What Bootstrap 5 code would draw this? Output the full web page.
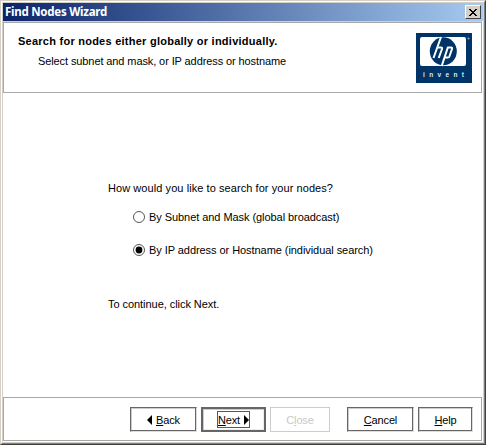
<!DOCTYPE html>
<html lang="en"><head><meta charset="utf-8"><title>Find Nodes Wizard</title>
<link href="https://cdn.jsdelivr.net/npm/bootstrap@5.3.0/dist/css/bootstrap.min.css" rel="stylesheet">
<style>
body{font:11px/14px "Liberation Sans",Arial,sans-serif;color:#000;background:#fff;overflow:hidden}
.wizard{width:486px;height:445px;border:1px solid #d4d0c8;border-right-color:#404040;border-bottom-color:#404040}
.frame-inner{border:1px solid #fff;border-right-color:#808080;border-bottom-color:#808080}
.frame-face{border:1px solid #d4d0c8;background:#fff}
.title-strip{height:18px;background:linear-gradient(90deg,#0a246a,#a6caf0);color:#fff;padding:0 2px;flex:none}
.title-text{font:bold 11.5px/18px "Noto Sans",sans-serif;letter-spacing:-.25px;white-space:nowrap}
.close-box{width:16px;height:14px;background:#d4d0c8;border:1px solid #fff;border-right-color:#404040;border-bottom-color:#404040}
.header-pane{height:71px;margin:1px 1px 0 0;border:1px solid #a8a8a8;padding:10px 9px 0 14px;box-shadow:0 -1px #d4d0c8;flex:none}
.headline{font-weight:bold;padding-top:1px;letter-spacing:.25px}
.subline{padding:6px 0 0 20px;letter-spacing:-.1px}
.body-pane{padding:88px 0 0 105px}
.ask{letter-spacing:.07px}
.choice{height:14px;padding-left:25px;gap:4px;letter-spacing:-.06px}
.first{margin-top:15px}.second{margin-top:19px}.hint{margin-top:40px;letter-spacing:-.05px}
.footer-pane{height:44px;border:1px solid #a8a8a8;margin:0 1px 1px 0;padding:9px 8px 0 0;gap:4px;flex:none}
.wbtn{height:25px;display:flex;align-items:center;justify-content:center;gap:4px;border:1px solid;border-color:#666 #ddd #ddd #666;border-radius:0;background:#fff;padding:0;font-size:11px;line-height:14px;color:#000;letter-spacing:-.15px;box-shadow:inset -1px -1px #666,inset 1px 1px #ccc}
.w67{width:67px}.w65{width:65px}.w60{width:60px;margin-right:13px}.w55{width:55px}
.main-btn{border:2px solid #666;box-shadow:inset 1px 1px #ccc,inset -1px -1px #eee}
.wbtn.off,.wbtn.off:disabled{color:#c8c8c8;border-color:#ccc;box-shadow:none;opacity:1;background:#fff}
.focus-box{border:1px solid #36618f;height:17px;width:33px;gap:4px}
</style>
<script src="https://cdn.jsdelivr.net/npm/bootstrap@5.3.0/dist/js/bootstrap.bundle.min.js"></script>
</head><body>
<main class="wizard"><div class="frame-inner h-100"><div class="frame-face h-100 d-flex flex-column">
<div class="title-strip d-flex justify-content-between align-items-center"><span class="title-text">Find Nodes Wizard</span>
<div class="close-box d-flex align-items-center justify-content-center"><svg width="8" height="7" viewBox="0 0 8 7" shape-rendering="crispEdges"><path d="M0 0h2v1h1v1h2V1h1V0h2v1H7v1H6v1H5v1h1v1h1v1h1v1H6V6H5V5H3v1H2v1H0V6h1V5h1V4h1V3H2V2H1V1H0z"/></svg></div></div>
<header class="header-pane d-flex justify-content-between"><div><div class="headline">Search for nodes either globally or individually.</div><div class="subline">Select subnet and mask, or IP address or hostname</div></div>
<svg width="56" height="50" viewBox="0 0 56 50"><path fill="#036" d="M0 0h56v50H0z"/><rect x="4" y="4" width="46" height="29" rx="2" fill="#fff"/><ellipse cx="27.300" cy="18.300" rx="13.500" ry="14" fill="#036"/><g fill="none" stroke="#fff" stroke-width="2"><path d="M25 4l-7.500 21M21.500 14.500H25q1.500 0 1 1.500L22.700 25M32 14l-6.300 19M31.500 14.500H35q1.500 0 1 1.500l-2.600 7.500q-.4 1-1.500 1H28"/></g><circle cx="52.500" cy="5.500" r="1" fill="#9ab"/><text x="7" y="44" fill="#dfe8f0" font-family="Liberation Sans" font-weight="bold" font-size="6.500" textLength="41" lengthAdjust="spacing">invent</text></svg></header>
<section class="body-pane flex-grow-1"><div class="ask">How would you like to search for your nodes?</div>
<div class="choice first d-flex align-items-center"><svg width="12" height="12"><circle cx="6" cy="6" r="5.500" fill="#fff" stroke="#555"/></svg><span>By Subnet and Mask (global broadcast)</span></div>
<div class="choice second d-flex align-items-center"><svg width="12" height="12"><circle cx="6" cy="6" r="5.500" fill="#fff" stroke="#555"/><circle cx="6" cy="6" r="3.400"/></svg><span>By IP address or Hostname (individual search)</span></div>
<div class="hint">To continue, click Next.</div></section>
<footer class="footer-pane d-flex justify-content-end">
<button class="btn wbtn w67"><svg width="5" height="10"><path d="M5 0v10L0 5z"/></svg><span><u>B</u>ack</span></button>
<button class="btn wbtn main-btn w65"><span class="focus-box d-flex align-items-center"><span><u>N</u>ext</span><svg width="5" height="10"><path d="M0 0v10l5-5z"/></svg></span></button>
<button class="btn wbtn off w60" disabled><span>C<u>l</u>ose</span></button>
<button class="btn wbtn w67"><span><u>C</u>ancel</span></button>
<button class="btn wbtn w55"><span><u>H</u>elp</span></button>
</footer>
</div></div></main></body></html>
